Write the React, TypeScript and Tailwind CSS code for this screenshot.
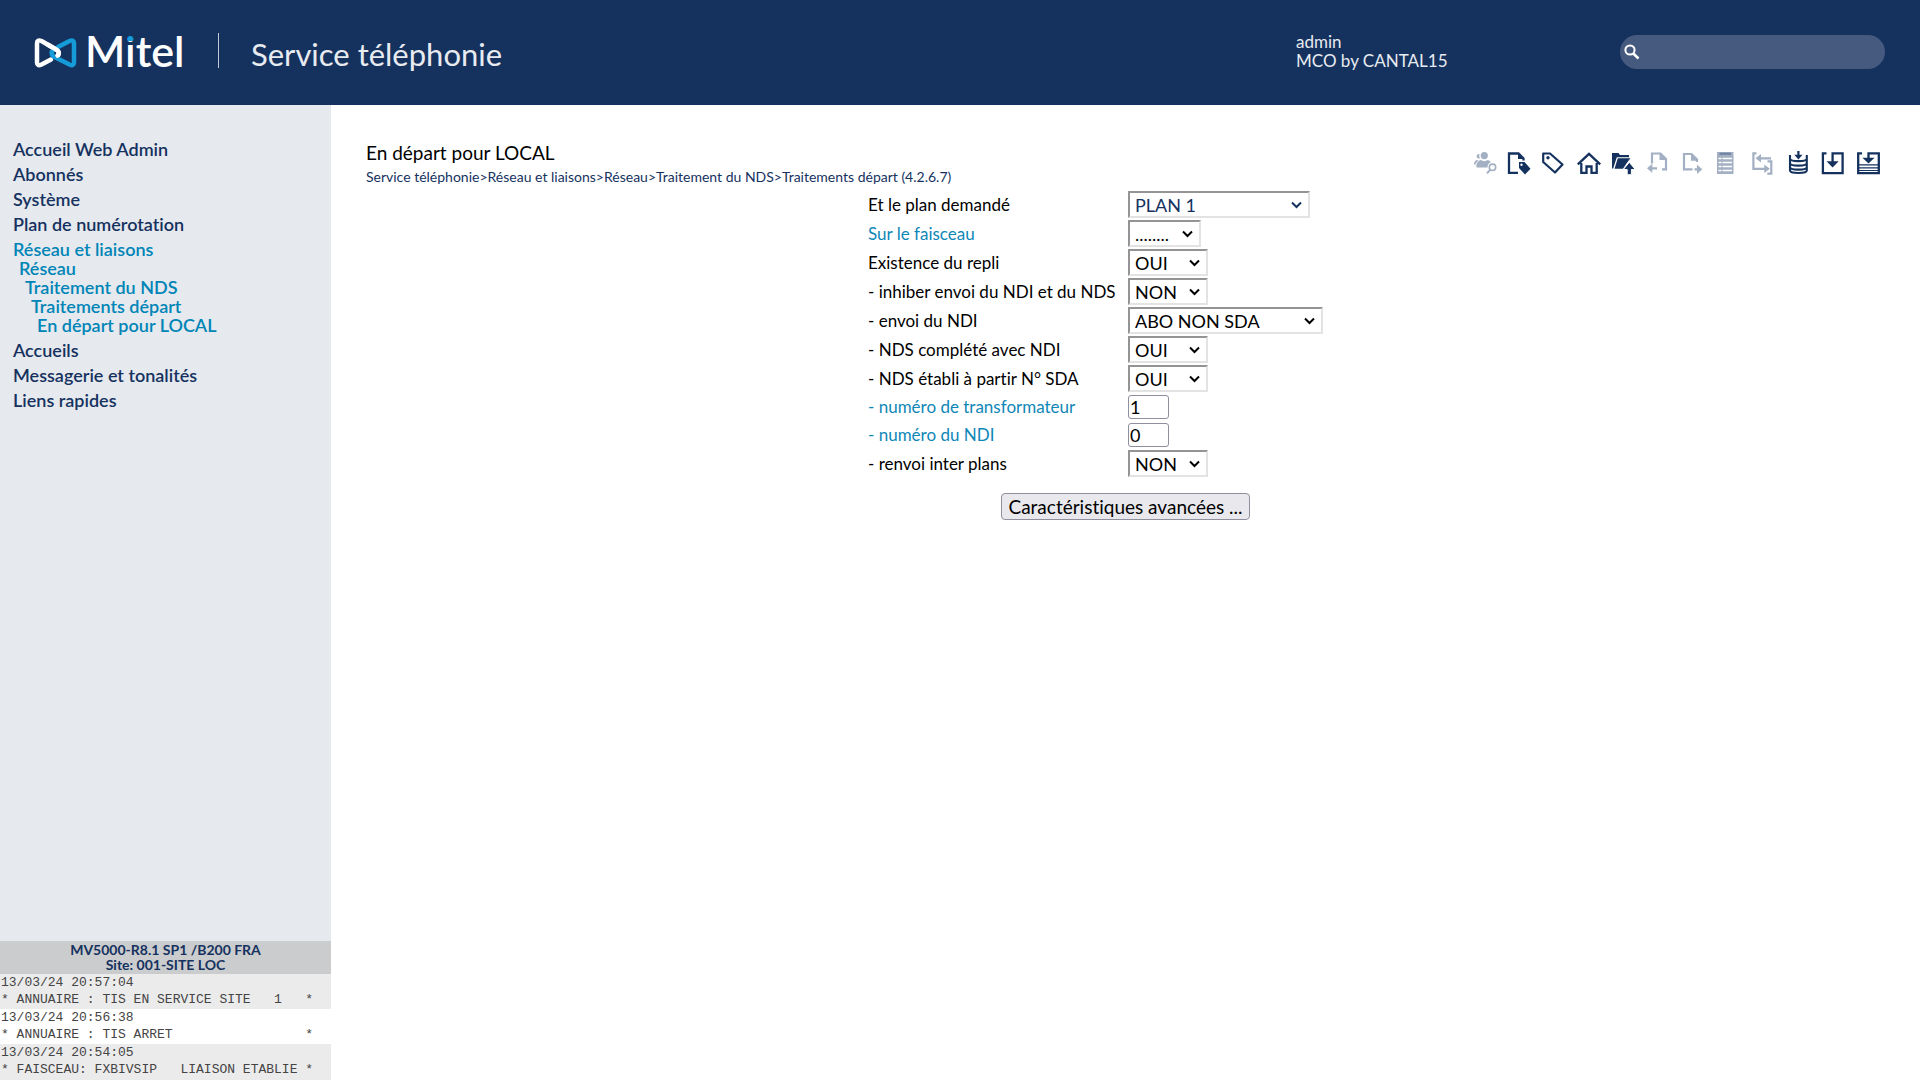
import { useState } from "react";
import type { ReactNode } from "react";

const menuItems = [
  { name: "Accueil Web Admin" },
  { name: "Abonnés" },
  { name: "Système" },
  { name: "Plan de numérotation" },
  {
    name: "Réseau et liaisons",
    path: [
      { name: "Réseau", indent: "pl-[6px]" },
      { name: "Traitement du NDS", indent: "pl-[12px]" },
      { name: "Traitements départ", indent: "pl-[18px]" },
      { name: "En départ pour LOCAL", indent: "pl-[24px]" },
    ],
  },
  { name: "Accueils" },
  { name: "Messagerie et tonalités" },
  { name: "Liens rapides" },
];

const logs = [
  { date: "13/03/24 20:57:04", text: "* ANNUAIRE : TIS EN SERVICE SITE   1   *" },
  { date: "13/03/24 20:56:38", text: "* ANNUAIRE : TIS ARRET                 *" },
  { date: "13/03/24 20:54:05", text: "* FAISCEAU: FXBIVSIP   LIAISON ETABLIE *" },
];

type Field = {
  id: string;
  label: string;
  value: string;
  options?: string[];
  width?: string;
  link?: boolean;
  navy?: boolean;
};

const fields: Field[] = [
  { id: "plan", label: "Et le plan demandé", value: "PLAN 1", options: ["PLAN 1", "PLAN 2"], width: "w-[182px]", navy: true },
  { id: "faisceau", label: "Sur le faisceau", value: "........", options: ["........"], width: "w-[73px]", link: true },
  { id: "repli", label: "Existence du repli", value: "OUI", options: ["OUI", "NON"], width: "w-[80px]" },
  { id: "inhiber", label: "- inhiber envoi du NDI et du NDS", value: "NON", options: ["OUI", "NON"], width: "w-[80px]" },
  { id: "envoi", label: "- envoi du NDI", value: "ABO NON SDA", options: ["ABO NON SDA"], width: "w-[195px]" },
  { id: "complete", label: "- NDS complété avec NDI", value: "OUI", options: ["OUI", "NON"], width: "w-[80px]" },
  { id: "etabli", label: "- NDS établi à partir N° SDA", value: "OUI", options: ["OUI", "NON"], width: "w-[80px]" },
  { id: "transformateur", label: "- numéro de transformateur", value: "1", link: true },
  { id: "ndi", label: "- numéro du NDI", value: "0", link: true },
  { id: "renvoi", label: "- renvoi inter plans", value: "NON", options: ["OUI", "NON"], width: "w-[80px]" },
];

const tools: { name: string; disabled?: boolean; icon: ReactNode }[] = [
  {
    name: "Rechercher un abonné",
    disabled: true,
    icon: (
      <>
        <g fill="currentColor">
          <circle cx="12.3" cy="4.6" r="3.6" />
          <path d="M4.5 16.5c-.6-4 1.500-6.800 4.300-7.500 2 1.500 5 1.500 7 0 1.300.4 2.300 1.100 3 2.200-2.200.9-3.400 2.800-3.200 5.300z" />
          <path d="M7.500 3a5 5 0 0 0 .4 4.300 2.300 2.300 0 1 1-.4-4.300zM2 13.500c0-2.300 1-3.900 3-4.400l1.600.6c-1.700.9-2.700 2-3 3.800z" />
        </g>
        <circle cx="20.500" cy="16.300" r="3.200" strokeWidth="1.600" />
        <path d="M18 18.800l-3 3.500" strokeWidth="2" />
      </>
    ),
  },
  {
    name: "Étiqueter la page",
    icon: (
      <>
        <path d="M16.500 9.500V7.500l-5-5H2v19.300h9" strokeWidth="2.300" />
        <path d="M11 2v6h6z" fill="currentColor" />
        <path fill="currentColor" fillRule="evenodd" d="M12 11h5.500l6 6.800-5.500 5.700-6-6.500zM14.500 12.600a1.200 1.200 0 1 0 0 2.400 1.200 1.200 0 0 0 0-2.400z" />
      </>
    ),
  },
  {
    name: "Étiquettes",
    icon: (
      <>
        <path d="M1.200 2.500H8l12.500 11-7.500 8L1.200 11z" strokeWidth="2.200" strokeLinejoin="round" />
        <circle cx="6" cy="6.800" r="1.700" fill="currentColor" />
      </>
    ),
  },
  {
    name: "Accueil",
    icon: (
      <path d="M.8 13.300L12 2.800l11.200 10.500M4.300 12v9.800h5.200v-6.300h5v6.300h5.200V12" strokeWidth="2.300" />
    ),
  },
  {
    name: "Dossier parent",
    icon: (
      <>
        <path fill="currentColor" d="M0 17.500V2h6.500l1.500 2h9v2.300H4.800L1.200 17.500z" />
        <path fill="currentColor" d="M5.800 7.300h12.700L15.500 11l-4.500 6.700H2.500z" />
        <path fill="currentColor" stroke="#fff" strokeWidth="1" d="M17.300 11.300l6 7.200h-3.900v5.200h-4.200v-5.200h-3.900z" />
      </>
    ),
  },
  {
    name: "Page précédente",
    disabled: true,
    icon: (
      <>
        <path d="M5 12.500v-10h8.500l5.500 5.500v10.300h-4" strokeWidth="2.200" />
        <path fill="currentColor" d="M12.500 2v7H20zM0 17.300l5.300-4.600v3.500h4.700v2.300H5.300V22z" />
      </>
    ),
  },
  {
    name: "Page suivante",
    disabled: true,
    icon: (
      <>
        <path d="M10.500 18.300H2V3h7.500l5.500 5.500v2.500" strokeWidth="2.200" />
        <path fill="currentColor" d="M9 2.500v7.200h7zM20.300 18.300L15 13.700v3.500h-2.500v2.300H15V23z" />
      </>
    ),
  },
  {
    name: "Liste",
    disabled: true,
    icon: (
      <>
        <path fill="currentColor" d="M0 1h16.500v22H0z" />
        <path d="M2.500 2.800H14" stroke="#7385a3" strokeWidth="2.200" />
        <path d="M1.500 7.500h3m1 0H15m-13.500 4h3m1 0H15m-13.500 4h3m1 0H15m-13.500 4h3m1 0H15" stroke="#fff" strokeWidth="1.400" />
      </>
    ),
  },
  {
    name: "Échanger",
    disabled: true,
    icon: (
      <>
        <path d="M4.500 2.300H1.400v15.500h12M6 7.300h13M15.500 10.300h3.800v12.400h-4" strokeWidth="2.200" />
        <path fill="currentColor" d="M3.500 7.300l5.500-4.300v8.600zM17.800 17.800l-5.500-4.300v8.600z" />
      </>
    ),
  },
  {
    name: "Sauvegarder la base",
    icon: (
      <>
        <path d="M3 4v15.500c0 3.300 16.800 3.300 16.800 0V4M3 7.500c0 3.500 16.800 3.500 16.800 0M3 12c0 3.500 16.800 3.500 16.800 0M3 16c0 3.500 16.800 3.500 16.800 0" strokeWidth="2.100" />
        <path fill="currentColor" d="M10.300 0h2.200v3.800h3l-4.100 4.800-4.100-4.800h3z" />
      </>
    ),
  },
  {
    name: "Télécharger",
    icon: (
      <>
        <path d="M4.500 2.300H.9v19.900h19.700V2.300h-10V11" strokeWidth="2.300" />
        <path fill="currentColor" d="M4.500 10.300h12.200l-6.100 6.200z" />
      </>
    ),
  },
  {
    name: "Télécharger tout",
    icon: (
      <>
        <path d="M5 2.300H1.200v19.900h20.600V2.300H11.500V7" strokeWidth="2.300" />
        <path fill="currentColor" d="M5.400 6.800h12.200l-6.100 5.700z" />
        <path d="M1 13.800h21M1 16.800h21M1 19.500h21" strokeWidth="1.200" />
      </>
    ),
  },
];

function Logo() {
  return (
    <svg className="h-[40px] w-[156px] overflow-visible" viewBox="0 0 156 40" role="img" aria-label="Mitel">
      <defs>
        <linearGradient id="dot" gradientUnits="userSpaceOnUse" x1="0" y1="0" x2="0" y2="20">
          <stop offset="0.4" stopColor="#159cd8" />
          <stop offset="0.4" stopColor="#fff" />
        </linearGradient>
      </defs>
      <g fill="none" strokeWidth="4.500" strokeLinejoin="round" strokeLinecap="round">
        <path stroke="#fff" d="M19 26.500L9.500 31.500Q5 33.500 5 29.500V10.500Q5 6 9.500 8L25 17Q28.500 20 25 24" />
        <path stroke="#159cd8" d="M26 14L37.500 8Q42 6 42 10.500v19Q42 33.500 37.500 31.500L21.500 23.500Q18 20 21.500 16.500" />
        <path stroke="#fff" d="M16 11.800L25 17Q28.500 20 25.500 22.500" />
      </g>
      <text x="53" y="34" fill="#fff" fontSize="43" fontWeight="600" className="font-['Lato',sans-serif]">
        M<tspan fill="url(#dot)">i</tspan>tel
      </text>
    </svg>
  );
}

function Header() {
  return (
    <header className="flex h-[105px] shrink-0 items-start bg-[#15325f] text-[#e8ebf0]">
      <div className="flex items-start pt-[33px] pl-[32px]">
        <Logo />
        <div className="ml-[30px] h-[35px] w-px bg-[#c3cad6]" />
        <h1 className="ml-[32px] pt-[3px] text-[31px] leading-[36px]">Service téléphonie</h1>
      </div>
      <div className="ml-auto w-[324px] pt-[32px] text-[17px] leading-[19px]">
        <p>admin</p>
        <p>MCO by CANTAL15</p>
      </div>
      <div className="mt-[35px] mr-[35px] flex h-[34px] w-[265px] items-center rounded-full bg-[#465a80] pl-1">
        <svg className="size-4" viewBox="0 0 16 16" fill="none" stroke="#fff">
          <circle cx="6" cy="6" r="4.600" strokeWidth="2" />
          <path d="M9.300 9.500l5.200 5" strokeWidth="2.600" />
        </svg>
        <input type="search" aria-label="Rechercher" className="min-w-0 flex-1 bg-transparent px-2 outline-none" />
      </div>
    </header>
  );
}

function Sidebar() {
  return (
    <aside className="flex w-[331px] shrink-0 flex-col bg-[#e6e9ee]">
      <nav className="flex flex-col gap-[6px] pt-[35px] pl-[13px] text-lg leading-[19px] font-semibold text-[#15325f]">
        {menuItems.map((item) => (
          <div key={item.name} className={item.path ? "text-[#0085b7]" : ""}>
            <a href="#" className="block">{item.name}</a>
            {item.path?.map((sub) => (
              <a key={sub.name} href="#" className={`block ${sub.indent}`}>{sub.name}</a>
            ))}
          </div>
        ))}
      </nav>

      <div className="mt-auto">
        <div className="bg-[#cbcccd] pt-[1px] pb-[2px] text-center text-sm leading-[15px] font-bold text-[#15325f]">
          <p>MV5000-R8.1 SP1 /B200 FRA</p>
          <p>Site: 001-SITE LOC</p>
        </div>
        {logs.map((log) => (
          <div key={log.date} className="pl-[1px] font-['Liberation_Mono',monospace] text-[13px] whitespace-pre text-[#444] last:pb-px odd:bg-white even:bg-[#ebebeb]">
            <p className="leading-[17px]">{log.date}</p>
            <p className="leading-[18px]">{log.text}</p>
          </div>
        ))}
      </div>
    </aside>
  );
}

function Toolbar() {
  return (
    <div className="flex gap-[11px]">
      {tools.map((tool) => (
        <button
          key={tool.name}
          type="button"
          title={tool.name}
          aria-label={tool.name}
          disabled={tool.disabled}
          className={tool.disabled ? "text-[#a3afc2]" : "cursor-pointer text-[#15325f]"}
        >
          <svg className="size-6 overflow-visible" viewBox="0 0 24 24" fill="none">
            <g stroke="currentColor" strokeWidth="0">{tool.icon}</g>
          </svg>
        </button>
      ))}
    </div>
  );
}

function FieldRow({ field }: { field: Field }) {
  const [value, setValue] = useState(field.value);

  return (
    <tr className={field.options ? "h-[29px]" : "h-[28px]"}>
      <td className="w-[260px] p-0 align-middle">
        <label htmlFor={field.id} className={field.link ? "text-[#0f87b7]" : "text-black"}>
          {field.link ? <a href="#">{field.label}</a> : field.label}
        </label>
      </td>
      <td className="w-[255px] p-0 align-middle">
        {field.options ? (
          <div className={`relative ${field.width} ${field.navy ? "text-[#15325f]" : "text-black"}`}>
            <select
              id={field.id}
              value={value}
              onChange={(e) => setValue(e.target.value)}
              className="block h-[27px] w-full appearance-none border-2 border-t-[#949494] border-r-[#e3e3e3] border-b-[#e3e3e3] border-l-[#949494] bg-white pl-[5px] text-lg leading-[22px]"
            >
              {field.options.map((option) => (
                <option key={option}>{option}</option>
              ))}
            </select>
            <svg className="pointer-events-none absolute top-[10px] right-[8px] h-[8px] w-[11px]" viewBox="0 0 11 8" fill="none" stroke="currentColor">
              <path d="M1 1.500l4.500 4.500L10 1.500" strokeWidth="2" />
            </svg>
          </div>
        ) : (
          <input
            id={field.id}
            value={value}
            onChange={(e) => setValue(e.target.value)}
            className="block h-[24px] w-[41px] rounded-[3px] border border-[#8f8f9d] bg-white px-[1px] text-lg"
          />
        )}
      </td>
    </tr>
  );
}

export default function App() {
  return (
    <div className="flex min-h-screen flex-col bg-white font-['Lato',sans-serif] [font-variant-ligatures:none]">
      <Header />
      <div className="flex flex-1">
        <Sidebar />
        <main className="flex-1">
          <div className="flex items-start justify-between pt-[38px] pr-[39px] pl-[35px]">
            <div>
              <h2 className="text-[19px] leading-[20px] text-black">En départ pour LOCAL</h2>
              <p className="mt-[5px] text-sm leading-[18px] text-[#15325f]">
                <a href="#">Service téléphonie</a>&gt;<a href="#">Réseau et liaisons</a>&gt;<a href="#">Réseau</a>&gt;
                <a href="#">Traitement du NDS</a>&gt;<a href="#">Traitements départ (4.2.6.7)</a>
              </p>
            </div>
            <div className="pt-[8px]">
              <Toolbar />
            </div>
          </div>

          <form className="flex flex-col items-center pt-[4px]" onSubmit={(e) => e.preventDefault()}>
            <table className="w-[515px] table-fixed border-collapse text-[17px] leading-[20px]">
              <tbody>
                {fields.map((field) => (
                  <FieldRow key={field.id} field={field} />
                ))}
              </tbody>
            </table>
            <button type="submit" className="mt-[15px] h-[27px] cursor-pointer rounded-[4px] border border-[#8f8f9d] bg-[#e9e9ed] px-[6px] text-[19px] leading-[22px] text-black">
              Caractéristiques avancées ...
            </button>
          </form>
        </main>
      </div>
    </div>
  );
}
